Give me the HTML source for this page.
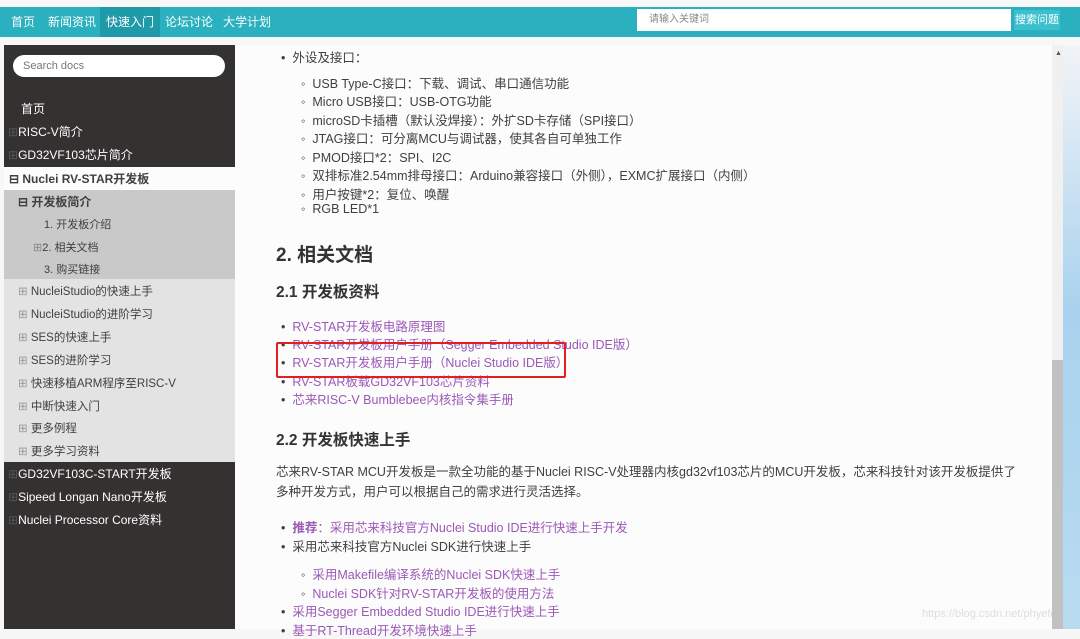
<!DOCTYPE html>
<html><head><meta charset="utf-8"><style>
*{margin:0;padding:0;box-sizing:border-box}
body{width:1080px;height:629px;overflow:hidden;background:#f7f7f7;font-family:"Liberation Sans","Noto Sans CJK SC",sans-serif;position:relative}
.top{position:absolute;left:0;top:7px;width:1080px;height:30px;background:#2ab0bf}
.top span{position:absolute;top:0;height:30px;line-height:30px;color:#fff;font-size:12px}
.top .act{background:#1f9aa8;padding:0 6px}
.srch{position:absolute;left:637px;top:9px;width:374px;height:22px;background:#fff;font-size:10px;color:#888;line-height:22px;padding-left:12px}
.sbtn{position:absolute;left:1014px;top:10px;width:46px;height:20px;background:#3cc0d0;color:#fff;font-size:11px;line-height:20px;text-align:center}
.side{position:absolute;left:4px;top:45px;width:231px;height:584px;background:#343131;font-size:12px}
.side div{position:absolute;white-space:nowrap}
.w{color:#fff}
.d{color:#404040}
.side .box{left:9px;top:10px;width:212px;height:22px;border-radius:11px;background:#fff;font-size:11px;color:#777;line-height:22px;padding-left:10px}
.main{position:absolute;left:235px;top:45px;width:817px;height:584px;background:#fcfcfc;font-size:12.5px;color:#404040}
.main div{position:absolute;white-space:nowrap}
.a{color:#9b59b6}
.scroll{position:absolute;left:1052px;top:45px;width:11px;height:584px;background:#f0f0f0}
.thumb{position:absolute;left:1052px;top:360px;width:11px;height:269px;background:#c1c1c1}
.right{position:absolute;left:1063px;top:45px;width:17px;height:584px;background:linear-gradient(#f2f4f7,#a9d2ee 45%,#b8dbf0)}
</style></head><body>
<div class="top">
<span style="left:11px">首页</span><span style="left:48px">新闻资讯</span><span class="act" style="left:100px">快速入门</span><span style="left:165px">论坛讨论</span><span style="left:223px">大学计划</span>
</div>
<div class="srch">请输入关键词</div>
<div class="sbtn">搜索问题</div>
<div class="side">
<div class="box">Search docs</div>
<div class="w" style="left:17px;top:55px">首页</div>
<div class="w" style="left:4px;top:78px"><span style="color:#555">⊞</span>RISC-V简介</div>
<div class="w" style="left:4px;top:101px"><span style="color:#555">⊞</span>GD32VF103芯片简介</div>
<div style="left:0;top:122px;width:231px;height:23px;background:#fcfcfc"></div>
<div class="d" style="left:5px;top:125px;font-weight:bold">⊟ Nuclei RV-STAR开发板</div>
<div style="left:0;top:145px;width:231px;height:89px;background:#c9c9c9"></div>
<div class="d" style="left:14px;top:148px;font-weight:bold">⊟ 开发板简介</div>
<div class="d" style="left:40px;top:171px;font-size:11px">1. 开发板介绍</div>
<div class="d" style="left:29px;top:194px;font-size:11px"><span style="color:#888">⊞</span>2. 相关文档</div>
<div class="d" style="left:40px;top:216px;font-size:11px">3. 购买链接</div>
<div style="left:0;top:234px;width:231px;height:183px;background:#e3e3e3"></div>
<div class="d" style="left:14px;top:238px;font-size:11.5px"><span style="color:#999">⊞</span> NucleiStudio的快速上手</div>
<div class="d" style="left:14px;top:261px;font-size:11.5px"><span style="color:#999">⊞</span> NucleiStudio的进阶学习</div>
<div class="d" style="left:14px;top:284px;font-size:11.5px"><span style="color:#999">⊞</span> SES的快速上手</div>
<div class="d" style="left:14px;top:307px;font-size:11.5px"><span style="color:#999">⊞</span> SES的进阶学习</div>
<div class="d" style="left:14px;top:330px;font-size:11.5px"><span style="color:#999">⊞</span> 快速移植ARM程序至RISC-V</div>
<div class="d" style="left:14px;top:353px;font-size:11.5px"><span style="color:#999">⊞</span> 中断快速入门</div>
<div class="d" style="left:14px;top:375px;font-size:11.5px"><span style="color:#999">⊞</span> 更多例程</div>
<div class="d" style="left:14px;top:398px;font-size:11.5px"><span style="color:#999">⊞</span> 更多学习资料</div>
<div class="w" style="left:4px;top:420px"><span style="color:#555">⊞</span>GD32VF103C-START开发板</div>
<div class="w" style="left:4px;top:443px"><span style="color:#555">⊞</span>Sipeed Longan Nano开发板</div>
<div class="w" style="left:4px;top:466px"><span style="color:#555">⊞</span>Nuclei Processor Core资料</div>
</div>
<div class="main">
<div style="left:46px;top:2px">• &nbsp;外设及接口：</div>
<div style="left:66px;top:28px">◦ &nbsp;USB Type-C接口：下载、调试、串口通信功能</div>
<div style="left:66px;top:46px">◦ &nbsp;Micro USB接口：USB-OTG功能</div>
<div style="left:66px;top:65px">◦ &nbsp;microSD卡插槽（默认没焊接）：外扩SD卡存储（SPI接口）</div>
<div style="left:66px;top:83px">◦ &nbsp;JTAG接口：可分离MCU与调试器，使其各自可单独工作</div>
<div style="left:66px;top:102px">◦ &nbsp;PMOD接口*2：SPI、I2C</div>
<div style="left:66px;top:120px">◦ &nbsp;双排标准2.54mm排母接口：Arduino兼容接口（外侧），EXMC扩展接口（内侧）</div>
<div style="left:66px;top:139px">◦ &nbsp;用户按键*2：复位、唤醒</div>
<div style="left:66px;top:157px">◦ &nbsp;RGB LED*1</div>
<div style="left:41px;top:195px;font-size:19px;font-weight:bold;color:#333">2. 相关文档</div>
<div style="left:41px;top:235px;font-size:15.5px;font-weight:bold;color:#333">2.1 开发板资料</div>
<div style="left:46px;top:271px"><span>•</span> &nbsp;<span class="a">RV-STAR开发板电路原理图</span></div>
<div style="left:46px;top:289px"><span>•</span> &nbsp;<span class="a">RV-STAR开发板用户手册（Segger Embedded Studio IDE版）</span></div>
<div style="left:46px;top:307px"><span>•</span> &nbsp;<span class="a">RV-STAR开发板用户手册（Nuclei Studio IDE版）</span></div>
<div style="left:46px;top:326px"><span>•</span> &nbsp;<span class="a">RV-STAR板载GD32VF103芯片资料</span></div>
<div style="left:46px;top:344px"><span>•</span> &nbsp;<span class="a">芯来RISC-V Bumblebee内核指令集手册</span></div>
<div style="left:41px;top:383px;font-size:15.5px;font-weight:bold;color:#333">2.2 开发板快速上手</div>
<div style="left:41px;top:416px">芯来RV-STAR MCU开发板是一款全功能的基于Nuclei RISC-V处理器内核gd32vf103芯片的MCU开发板，芯来科技针对该开发板提供了</div>
<div style="left:41px;top:436px">多种开发方式，用户可以根据自己的需求进行灵活选择。</div>
<div style="left:46px;top:472px">• &nbsp;<b class="a">推荐</b><span class="a">：采用芯来科技官方Nuclei Studio IDE进行快速上手开发</span></div>
<div style="left:46px;top:491px">• &nbsp;采用芯来科技官方Nuclei SDK进行快速上手</div>
<div style="left:66px;top:519px">◦ &nbsp;<span class="a">采用Makefile编译系统的Nuclei SDK快速上手</span></div>
<div style="left:66px;top:538px">◦ &nbsp;<span class="a">Nuclei SDK针对RV-STAR开发板的使用方法</span></div>
<div style="left:46px;top:556px">• &nbsp;<span class="a">采用Segger Embedded Studio IDE进行快速上手</span></div>
<div style="left:46px;top:575px">• &nbsp;<span class="a">基于RT-Thread开发环境快速上手</span></div>
<div style="left:41px;top:297px;width:290px;height:36px;border:2px solid #e02020;border-radius:2px"></div>
<div style="left:687px;top:563px;color:#ddd;font-size:11px">https://blog.csdn.net/phyefo</div>
</div>
<div class="scroll"></div><div class="thumb"></div>
<div style="position:absolute;left:1055px;top:50px;font-size:7px;color:#555">▲</div>
<div class="right"></div>
</body></html>
